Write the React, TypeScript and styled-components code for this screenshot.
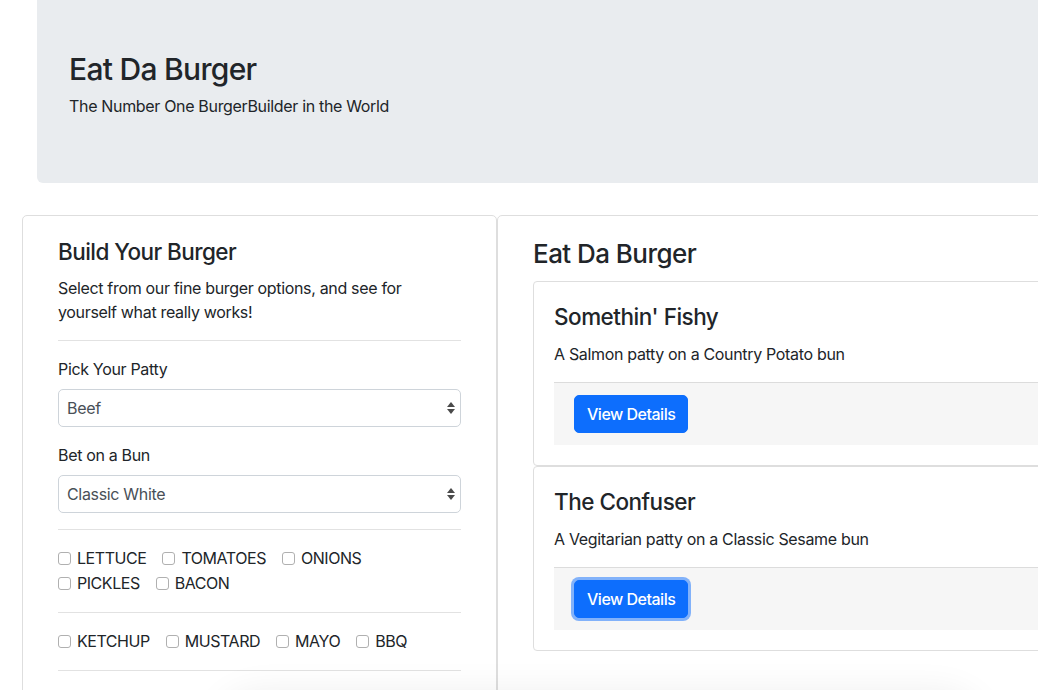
import React from "react";
import styled, { createGlobalStyle } from "styled-components";

const GlobalStyle = createGlobalStyle`
  html, body {
    margin: 0;
    padding: 0;
    overflow: hidden;
    background: #ffffff;
  }
  body {
    font-family: Inter, "Liberation Sans", Arial, sans-serif;
    color: #212529;
    font-size: 16px;
    line-height: 24px;
    letter-spacing: -0.33px;
  }
  * { box-sizing: border-box; }
`;

const Page = styled.div`
  position: relative;
  width: 1400px;
  height: 690px;
  overflow: hidden;
`;

const Jumbotron = styled.header`
  margin-left: 37px;
  height: 183px;
  background: #e9ecef;
  border-radius: 0 0 0 6px;
  padding: 51px 32px 0;
`;

const JumboTitle = styled.h1`
  margin: 0 0 7px;
  font-size: 30px;
  line-height: 36px;
  font-weight: 500;
  letter-spacing: -0.7px;
`;

const JumboLead = styled.p`
  margin: 0;
  font-size: 16px;
  line-height: 24px;
`;

const Columns = styled.main`
  display: flex;
  align-items: flex-start;
  margin-top: 32px;
  padding-left: 22px;
`;

const Panel = styled.section<{ $width: number }>`
  width: ${(p) => p.$width}px;
  flex: none;
  height: 560px;
  border: 1px solid #dedede;
  border-radius: 5px;
  padding: 22px 35px;
  background: #fff;
`;

const PanelTitle = styled.h2<{ $size: number; $gap: number }>`
  margin: 0 0 ${(p) => p.$gap}px;
  font-size: ${(p) => p.$size}px;
  line-height: 1.2;
  font-weight: 500;
  letter-spacing: -0.55px;
`;

const Lead = styled.p`
  margin: 0 0 16px;
`;

const Rule = styled.hr`
  margin: 16px 0;
  border: 0;
  border-top: 1px solid #e2e2e2;
`;

const Field = styled.div`
  margin-bottom: 16px;
`;

const Label = styled.label`
  display: block;
  margin-bottom: 8px;
`;

const SelectWrap = styled.div`
  position: relative;
`;

const Select = styled.select`
  appearance: none;
  -webkit-appearance: none;
  width: 100%;
  height: 38px;
  border: 1px solid #ced4da;
  border-radius: 5px;
  background: #fff;
  padding: 0 30px 0 8px;
  font-family: inherit;
  font-size: 16px;
  letter-spacing: -0.33px;
  color: #495057;
`;

const Arrows = styled.svg`
  position: absolute;
  right: 5px;
  top: 12px;
  pointer-events: none;
`;

const CheckGroup = styled.div`
  display: flex;
  flex-direction: column;
`;

const CheckRow = styled.div`
  display: flex;
  gap: 16px;
`;

const CheckLabel = styled.label`
  display: flex;
  align-items: center;
  gap: 6px;
  line-height: 25px;
  letter-spacing: -0.45px;
`;

const Box = styled.input`
  appearance: none;
  -webkit-appearance: none;
  margin: 0;
  width: 13px;
  height: 13px;
  border: 1px solid #b0b0b0;
  border-radius: 3px;
  background: #fff;
`;

const Card = styled.article`
  border: 1px solid #dedede;
  border-radius: 4px;
  padding: 21px 20px 20px;
`;

const CardTitle = styled.h4`
  margin: 0 0 12px;
  font-size: 22.5px;
  line-height: 27px;
  font-weight: 500;
  letter-spacing: -0.5px;
`;

const CardText = styled.p`
  margin: 0 0 16px;
`;

const CardFooter = styled.div`
  background: #f6f6f6;
  border-top: 1px solid #dcdcdc;
  padding: 12px 20px;
`;

const Button = styled.button<{ $focused?: boolean }>`
  font-family: inherit;
  font-size: 16px;
  line-height: 24px;
  font-weight: 500;
  letter-spacing: -0.5px;
  color: #fff;
  background: #0d6efd;
  border: 1px solid #0d6efd;
  border-radius: 5px;
  padding: 6px 12px;
  box-shadow: ${(p) => (p.$focused ? "0 0 0 3px rgba(13,110,253,0.5)" : "none")};
`;

const BottomShade = styled.div`
  position: absolute;
  left: 230px;
  top: 706px;
  width: 740px;
  height: 60px;
  border-radius: 30px;
  box-shadow: 0 0 36px 14px rgba(0, 0, 0, 0.07);
`;

const ArrowIcon = () => (
  <Arrows width="10" height="14" viewBox="0 0 10 14">
    <path d="M5 1 L9 6 H1 Z" fill="#4a4a4a" />
    <path d="M5 13 L9 8 H1 Z" fill="#4a4a4a" />
  </Arrows>
);

const Check = ({ label }: { label: string }) => (
  <CheckLabel>
    <Box type="checkbox" />
    {label}
  </CheckLabel>
);

const burgers = [
  { name: "Somethin' Fishy", desc: "A Salmon patty on a Country Potato bun", focused: false },
  { name: "The Confuser", desc: "A Vegitarian patty on a Classic Sesame bun", focused: true },
];

export default function App() {
  return (
    <>
      <GlobalStyle />
      <Page>
        <Jumbotron>
          <JumboTitle>Eat Da Burger</JumboTitle>
          <JumboLead>The Number One BurgerBuilder in the World</JumboLead>
        </Jumbotron>
        <Columns>
          <Panel $width={475}>
            <PanelTitle $size={22.5} $gap={11}>Build Your Burger</PanelTitle>
            <Lead>
              Select from our fine burger options, and see for
              <br />
              yourself what really works!
            </Lead>
            <Rule />
            <Field>
              <Label>Pick Your Patty</Label>
              <SelectWrap>
                <Select defaultValue="Beef">
                  <option>Beef</option>
                </Select>
                <ArrowIcon />
              </SelectWrap>
            </Field>
            <Field>
              <Label>Bet on a Bun</Label>
              <SelectWrap>
                <Select defaultValue="Classic White">
                  <option>Classic White</option>
                </Select>
                <ArrowIcon />
              </SelectWrap>
            </Field>
            <Rule />
            <CheckGroup>
              <CheckRow>
                <Check label="LETTUCE" />
                <Check label="TOMATOES" />
                <Check label="ONIONS" />
              </CheckRow>
              <CheckRow>
                <Check label="PICKLES" />
                <Check label="BACON" />
              </CheckRow>
            </CheckGroup>
            <Rule />
            <CheckGroup>
              <CheckRow>
                <Check label="KETCHUP" />
                <Check label="MUSTARD" />
                <Check label="MAYO" />
                <Check label="BBQ" />
              </CheckRow>
            </CheckGroup>
            <Rule />
          </Panel>
          <Panel $width={700}>
            <PanelTitle $size={26} $gap={12}>Eat Da Burger</PanelTitle>
            {burgers.map((b) => (
              <Card key={b.name}>
                <CardTitle>{b.name}</CardTitle>
                <CardText>{b.desc}</CardText>
                <CardFooter>
                  <Button $focused={b.focused}>View Details</Button>
                </CardFooter>
              </Card>
            ))}
          </Panel>
        </Columns>
        <BottomShade />
      </Page>
    </>
  );
}
